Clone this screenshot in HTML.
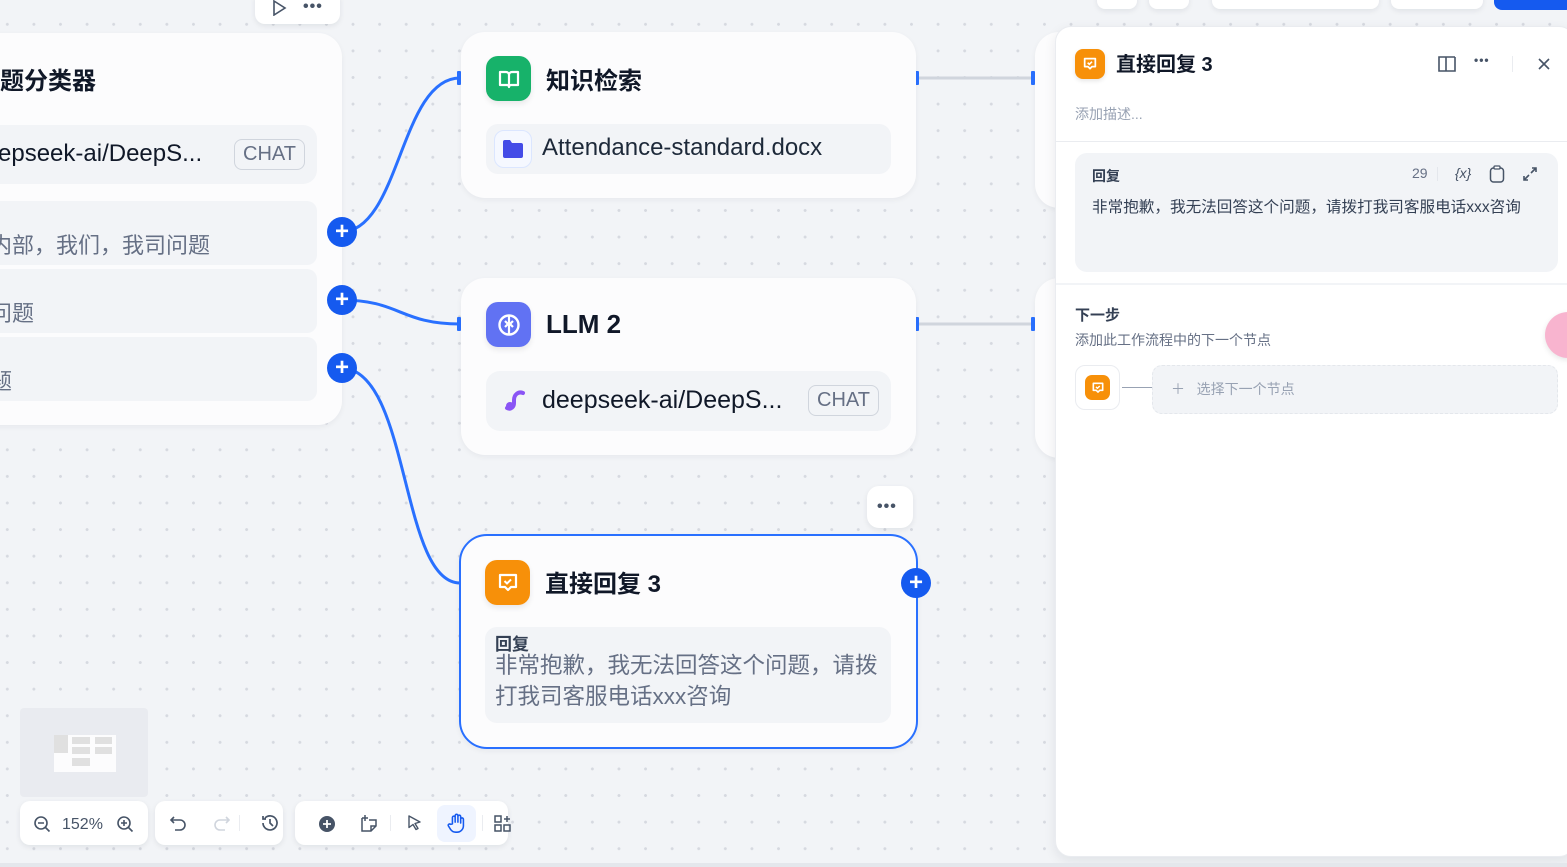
<!DOCTYPE html>
<html><head><meta charset="utf-8"><style>
*{box-sizing:border-box;margin:0;padding:0}
body{width:1567px;height:867px;overflow:hidden;position:relative;background:#f2f4f7;font-family:"Liberation Sans","Noto Sans CJK SC",sans-serif;color:#101828}
.grid{position:absolute;inset:0;background-image:radial-gradient(circle,#d6d9e0 1.3px,transparent 1.6px);background-size:26.6px 26.6px;background-position:-6px 11px}
.abs{position:absolute}
.node{position:absolute;background:#fcfcfd;border-radius:24px;box-shadow:0 2px 6px rgba(16,24,40,.05)}
.ic{position:absolute;width:45px;height:45px;border-radius:12px;display:flex;align-items:center;justify-content:center;box-shadow:0 3px 6px rgba(0,0,0,.08)}
.row{position:absolute;background:#f2f4f7;border-radius:14px}
.chat{position:absolute;border:1.5px solid #d0d5dd;border-radius:8px;color:#667085;font-size:20px;padding:1px 8px;line-height:27px}
.hdl{position:absolute;width:30px;height:30px;border-radius:50%;background:#155aef;color:#fff;display:flex;align-items:center;justify-content:center}
.bar{position:absolute;background:#fff;border-radius:10px;box-shadow:0 2px 6px rgba(16,24,40,.08)}
.pin{position:absolute;width:4px;height:14px;background:#2970ff;border-radius:1px}
</style></head><body>
<div class="grid"></div>

<svg class="abs" style="left:0;top:0" width="1567" height="867">
<path d="M341 232 C400 232,400 78,460 78" stroke="#2970ff" stroke-width="3" fill="none"/>
<path d="M341 300 C400 300,400 324,460 324" stroke="#2970ff" stroke-width="3" fill="none"/>
<path d="M341 368 C410 368,400 583,460 583" stroke="#2970ff" stroke-width="3" fill="none"/>
<line x1="918" y1="78" x2="1034" y2="78" stroke="#d0d5dd" stroke-width="3"/>
<line x1="918" y1="324" x2="1034" y2="324" stroke="#d0d5dd" stroke-width="3"/>
</svg>
<div class="pin" style="left:457px;top:71px"></div>
<div class="pin" style="left:457px;top:317px"></div>
<div class="pin" style="left:915px;top:71px"></div>
<div class="pin" style="left:1031px;top:71px"></div>
<div class="pin" style="left:915px;top:317px"></div>
<div class="pin" style="left:1031px;top:317px"></div>

<div class="bar" style="left:255px;top:-10px;width:85px;height:34px;border-radius:10px">
<svg class="abs" style="left:16px;top:10px" width="16" height="16"><path d="M3 1 L14 8 L3 15Z" fill="none" stroke="#475467" stroke-width="1.6"/></svg>
<div class="abs" style="left:48px;top:8px;font-size:16px;color:#475467;font-weight:700;letter-spacing:1px">•••</div>
</div>

<div class="node" style="left:-30px;top:33px;width:372px;height:392px">
<div class="row" style="left:0;top:92px;width:347px;height:59px">
<div class="abs" style="left:28px;top:15px;font-size:24px;color:#101828">epseek-ai/DeepS...</div>
<div class="chat" style="left:264px;top:14px">CHAT</div></div>
<div class="row" style="left:0;top:168px;width:347px;height:64px;border-radius:10px"><div class="abs" style="left:20px;top:27px;font-size:22px;color:#667085">内部，我们，我司问题</div></div>
<div class="row" style="left:0;top:236px;width:347px;height:64px;border-radius:10px"><div class="abs" style="left:20px;top:27px;font-size:22px;color:#667085">问题</div></div>
<div class="row" style="left:0;top:304px;width:347px;height:64px;border-radius:10px"><div class="abs" style="left:20px;top:27px;font-size:22px;color:#667085">题</div></div>
</div>
<div class="abs" style="left:0;top:61px;font-size:24px;font-weight:700;overflow:hidden;width:100px;white-space:nowrap"><span style="margin-left:-24px">问题分类器</span></div>
<div class="hdl" style="left:327px;top:217px"><b style="font-size:24px;line-height:24px">+</b></div>
<div class="hdl" style="left:327px;top:285px"><b style="font-size:24px;line-height:24px">+</b></div>
<div class="hdl" style="left:327px;top:353px"><b style="font-size:24px;line-height:24px">+</b></div>

<div class="node" style="left:461px;top:32px;width:455px;height:166px">
<div class="ic" style="left:25px;top:24px;background:#17b26a"><svg width="24" height="24" viewBox="0 0 24 24"><path d="M3 5h6a3 3 0 0 1 3 3v12a2 2 0 0 0-2-2H3zM21 5h-6a3 3 0 0 0-3 3v12a2 2 0 0 1 2-2h7z" fill="none" stroke="#fff" stroke-width="2.2" stroke-linejoin="round"/></svg></div>
<div class="row" style="left:25px;top:92px;width:405px;height:50px;border-radius:12px">
<div class="abs" style="left:8px;top:6px;width:38px;height:38px;border:1px solid #dbe6ff;background:#f5f8ff;border-radius:10px;display:flex;align-items:center;justify-content:center"><svg width="22" height="20"><path d="M1 3a2 2 0 0 1 2-2h5l2 3h9a2 2 0 0 1 2 2v11a2 2 0 0 1-2 2H3a2 2 0 0 1-2-2z" fill="#444ce7"/></svg></div>
<div class="abs" style="left:56px;top:10px;font-size:24px;color:#1d2939">Attendance-standard.docx</div></div>
</div>
<div class="abs" style="left:546px;top:61px;font-size:24px;font-weight:700">知识检索</div>

<div class="node" style="left:461px;top:278px;width:455px;height:177px">
<div class="ic" style="left:25px;top:24px;background:#6172f3"><svg width="26" height="26" viewBox="0 0 26 26"><circle cx="13" cy="13" r="9.5" fill="none" stroke="#fff" stroke-width="2.4"/><path d="M13 4v18M9 9l3 3-3 3M17 9l-3 3 3 3" fill="none" stroke="#fff" stroke-width="2.2"/></svg></div>
<div class="row" style="left:25px;top:93px;width:405px;height:60px">
<svg class="abs" style="left:16px;top:18px" width="26" height="26"><path d="M21 4c-5-2-9 2-9 7v3c0 4-3 7-7 5" fill="none" stroke="#8a54f5" stroke-width="4" stroke-linecap="round"/><circle cx="8" cy="17" r="4" fill="#8a54f5"/></svg>
<div class="abs" style="left:56px;top:15px;font-size:25px;color:#101828">deepseek-ai/DeepS...</div>
<div class="chat" style="left:322px;top:14px">CHAT</div></div>
</div>
<div class="abs" style="left:546px;top:309px;font-size:26px;font-weight:700">LLM 2</div>

<div class="node" style="left:1035px;top:32px;width:80px;height:176px;border-radius:24px"></div>
<div class="node" style="left:1035px;top:278px;width:80px;height:180px;border-radius:24px"></div>

<div class="bar" style="left:867px;top:486px;width:46px;height:42px;border-radius:12px"><div class="abs" style="left:10px;top:12px;font-size:16px;color:#475467;letter-spacing:1px;font-weight:700">•••</div></div>

<div class="node" style="left:459px;top:534px;width:459px;height:215px;border:2.5px solid #2970ff;border-radius:28px;background:#fcfcfd">
<div class="ic" style="left:24px;top:24px;background:#f79009"><svg width="24" height="24" viewBox="0 0 24 24"><path d="M4 4h16v12h-5l-3 3-3-3H4z" fill="none" stroke="#fff" stroke-width="2.2" stroke-linejoin="round"/><path d="M8.5 10l2.5 2.5 4-4" fill="none" stroke="#fff" stroke-width="2"/></svg></div>
<div class="abs" style="left:84px;top:28px;font-size:24px;font-weight:700">直接回复 3</div>
<div class="row" style="left:24px;top:91px;width:406px;height:96px;border-radius:12px">
<div class="abs" style="left:10px;top:8px;font-size:17px;font-weight:700;color:#344054;line-height:20px">回复</div>
<div class="abs" style="left:10px;top:23px;font-size:22.5px;color:#667085;line-height:31px;width:395px">非常抱歉，我无法回答这个问题，请拨打我司客服电话xxx咨询</div></div>
</div>
<div class="hdl" style="left:901px;top:568px"><b style="font-size:24px;line-height:24px">+</b></div>

<div class="bar" style="left:1097px;top:-10px;width:40px;height:19px;border-radius:8px"></div>
<div class="bar" style="left:1149px;top:-10px;width:40px;height:19px;border-radius:8px"></div>
<div class="bar" style="left:1212px;top:-10px;width:167px;height:19px;border-radius:8px"></div>
<div class="bar" style="left:1391px;top:-10px;width:92px;height:19px;border-radius:8px"></div>
<div class="abs" style="left:1494px;top:-10px;width:80px;height:20px;border-radius:8px;background:#155aef"></div>

<div class="abs" style="left:1055px;top:26px;width:520px;height:831px;background:#fff;border-radius:16px;box-shadow:0 4px 12px rgba(16,24,40,.08);border:1px solid #eaecf0">
<div class="abs" style="left:19px;top:22px;width:30px;height:30px;border-radius:8px;background:#f79009;display:flex;align-items:center;justify-content:center;box-shadow:0 2px 4px rgba(0,0,0,.1)"><svg width="16" height="16" viewBox="0 0 24 24"><path d="M4 4h16v12h-5l-3 3-3-3H4z" fill="none" stroke="#fff" stroke-width="2.6" stroke-linejoin="round"/><path d="M8.5 10l2.5 2.5 4-4" fill="none" stroke="#fff" stroke-width="2.4"/></svg></div>
<div class="abs" style="left:60px;top:21px;font-size:20px;font-weight:700">直接回复 3</div>
<svg class="abs" style="left:382px;top:28px" width="18" height="18"><path d="M1 2h7v14H1zM17 2h-9M17 2v14H8" fill="none" stroke="#475467" stroke-width="1.6"/></svg>
<div class="abs" style="left:418px;top:26px;font-size:12px;color:#475467;font-weight:700;letter-spacing:1px">•••</div>
<div class="abs" style="left:456px;top:29px;width:1px;height:16px;background:#eaecf0"></div>
<svg class="abs" style="left:481px;top:30px" width="14" height="14"><path d="M2 2l10 10M12 2L2 12" stroke="#475467" stroke-width="1.6"/></svg>
<div class="abs" style="left:19px;top:77px;font-size:14px;color:#98a2b3">添加描述...</div>
<div class="abs" style="left:0;top:114px;width:100%;height:1px;background:#eaecf0"></div>
<div class="abs" style="left:19px;top:126px;width:483px;height:119px;background:#f2f4f7;border-radius:12px">
<div class="abs" style="left:17px;top:13px;font-size:14px;font-weight:700;color:#344054">回复</div>
<div class="abs" style="left:337px;top:12px;font-size:14px;color:#667085">29</div>
<div class="abs" style="left:362px;top:14px;width:1px;height:14px;background:#e4e7ec"></div>
<div class="abs" style="left:380px;top:12px;font-size:14px;color:#475467;font-style:italic">{x}</div>
<svg class="abs" style="left:414px;top:12px" width="16" height="18"><rect x="1.5" y="3" width="13" height="14" rx="3" fill="none" stroke="#475467" stroke-width="1.5"/><rect x="5" y="1" width="6" height="3" rx="1" fill="#fff" stroke="#475467" stroke-width="1.3"/></svg>
<svg class="abs" style="left:447px;top:13px" width="16" height="16"><path d="M10 2h4v4M14 2l-5 5M6 14H2v-4M2 14l5-5" fill="none" stroke="#475467" stroke-width="1.6"/></svg>
<div class="abs" style="left:17px;top:42px;font-size:15.6px;color:#344054;white-space:nowrap">非常抱歉，我无法回答这个问题，请拨打我司客服电话xxx咨询</div>
</div>
<div class="abs" style="left:0;top:256px;width:100%;height:2px;background:#f2f4f7"></div>
<div class="abs" style="left:19px;top:277px;font-size:15px;font-weight:700;color:#344054">下一步</div>
<div class="abs" style="left:19px;top:303px;font-size:14px;color:#667085">添加此工作流程中的下一个节点</div>
<div class="abs" style="left:19px;top:338px;width:45px;height:45px;border:1px solid #eaecf0;border-radius:10px;background:#fff;display:flex;align-items:center;justify-content:center"><div style="width:25px;height:25px;border-radius:7px;background:#f79009;display:flex;align-items:center;justify-content:center"><svg width="14" height="14" viewBox="0 0 24 24"><path d="M4 4h16v12h-5l-3 3-3-3H4z" fill="none" stroke="#fff" stroke-width="2.8" stroke-linejoin="round"/><path d="M8.5 10l2.5 2.5 4-4" fill="none" stroke="#fff" stroke-width="2.4"/></svg></div></div>
<div class="abs" style="left:66px;top:360px;width:30px;height:1px;background:#98a2b3"></div>
<div class="abs" style="left:96px;top:338px;width:406px;height:49px;border-radius:10px;background:#f2f4f7;border:1.5px dashed #e4e7ec;font-size:14px;color:#98a2b3;padding:13px 0 0 18px">＋&nbsp;&nbsp;&nbsp;选择下一个节点</div>
<div class="abs" style="left:489px;top:285px;width:46px;height:46px;border-radius:50%;background:#f8b4cf;box-shadow:0 2px 6px rgba(0,0,0,.1)"></div>
</div>

<div class="abs" style="left:20px;top:708px;width:128px;height:89px;background:#e9ebf0;border-radius:4px">
<div class="abs" style="left:34px;top:27px;width:62px;height:37px;background:#fcfcfd"></div>
<div class="abs" style="left:34px;top:27px;width:14px;height:18px;background:#e0e0e0"></div>
<div class="abs" style="left:52px;top:29px;width:18px;height:7px;background:#e0e0e0"></div>
<div class="abs" style="left:52px;top:39px;width:18px;height:7px;background:#e0e0e0"></div>
<div class="abs" style="left:75px;top:29px;width:17px;height:7px;background:#e0e0e0"></div>
<div class="abs" style="left:75px;top:39px;width:17px;height:7px;background:#e0e0e0"></div>
<div class="abs" style="left:52px;top:50px;width:18px;height:8px;background:#e0e0e0"></div>
</div>

<div class="bar" style="left:20px;top:801px;width:128px;height:44px">
<svg class="abs" style="left:13px;top:14px" width="18" height="18"><circle cx="8" cy="8" r="6" fill="none" stroke="#475467" stroke-width="1.6"/><path d="M5 8h6M12.5 12.5l4 4" stroke="#475467" stroke-width="1.6"/></svg>
<div class="abs" style="left:42px;top:15px;font-size:16px;color:#475467">152%</div>
<svg class="abs" style="left:96px;top:14px" width="18" height="18"><circle cx="8" cy="8" r="6" fill="none" stroke="#475467" stroke-width="1.6"/><path d="M5 8h6M8 5v6M12.5 12.5l4 4" stroke="#475467" stroke-width="1.6"/></svg>
</div>
<div class="bar" style="left:155px;top:801px;width:128px;height:44px">
<svg class="abs" style="left:14px;top:13px" width="20" height="18"><path d="M5 3L2 6l3 3M2 6h9a5 5 0 0 1 0 10H6" fill="none" stroke="#475467" stroke-width="1.6"/></svg>
<svg class="abs" style="left:56px;top:13px" width="20" height="18"><path d="M15 3l3 3-3 3M18 6H9a5 5 0 0 0 0 10h5" fill="none" stroke="#d0d5dd" stroke-width="1.6"/></svg>
<div class="abs" style="left:84px;top:14px;width:1px;height:16px;background:#eaecf0"></div>
<svg class="abs" style="left:105px;top:13px" width="20" height="18"><path d="M3 9a7 7 0 1 0 2-5M3 2v3h3M10 5v4l3 3" fill="none" stroke="#475467" stroke-width="1.7"/></svg>
</div>
<div class="bar" style="left:295px;top:801px;width:213px;height:44px">
<svg class="abs" style="left:23px;top:14px" width="18" height="18"><circle cx="9" cy="9" r="8" fill="#475467"/><path d="M5 9h8M9 5v8" stroke="#fff" stroke-width="1.8"/></svg>
<svg class="abs" style="left:64px;top:13px" width="20" height="20"><path d="M3 4v13h9l5-5V6h-7M12 17v-5h5M6 1v6M3 4h6" fill="none" stroke="#475467" stroke-width="1.5"/></svg>
<div class="abs" style="left:95px;top:14px;width:1px;height:16px;background:#eaecf0"></div>
<svg class="abs" style="left:112px;top:14px" width="16" height="18"><path d="M2 1l11 6-5 1.5 3 5-2 1-3-5-4 3z" fill="none" stroke="#475467" stroke-width="1.4" stroke-linejoin="round"/></svg>
<div class="abs" style="left:142px;top:4px;width:39px;height:37px;border-radius:8px;background:#eff4ff"></div>
<svg class="abs" style="left:151px;top:11px" width="22" height="22" viewBox="0 0 24 24"><path d="M7 13V6a1.5 1.5 0 0 1 3 0v5V4a1.5 1.5 0 0 1 3 0v7V5a1.5 1.5 0 0 1 3 0v7-4a1.5 1.5 0 0 1 3 0v7a7 7 0 0 1-7 7h-1a7 7 0 0 1-6-3l-2.5-4a1.5 1.5 0 0 1 2.5-1.5z" fill="none" stroke="#155aef" stroke-width="1.7" stroke-linejoin="round"/></svg>
<div class="abs" style="left:187px;top:14px;width:1px;height:16px;background:#eaecf0"></div>
<svg class="abs" style="left:199px;top:14px" width="18" height="18"><rect x="1" y="1" width="6" height="6" fill="none" stroke="#475467" stroke-width="1.5"/><rect x="1" y="10" width="6" height="6" fill="none" stroke="#475467" stroke-width="1.5"/><rect x="10" y="10" width="6" height="6" fill="none" stroke="#475467" stroke-width="1.5"/><path d="M13 1v6M10 4h6" stroke="#475467" stroke-width="1.5"/></svg>
</div>
<div class="abs" style="left:0;top:863px;width:1567px;height:4px;background:#e4e7ec"></div>
</body></html>
